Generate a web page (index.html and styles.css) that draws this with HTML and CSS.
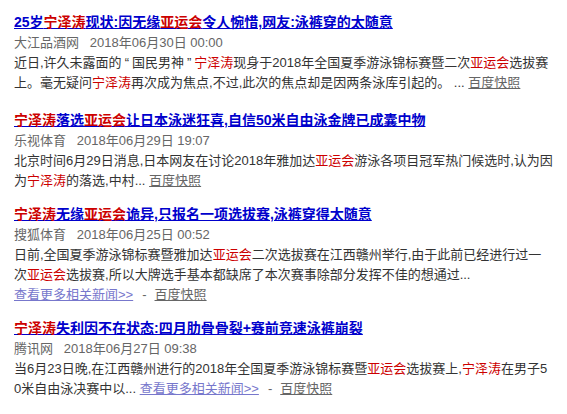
FILE: index.html
```html
<!DOCTYPE html>
<html lang="zh-CN">
<head>
<meta charset="utf-8">
<title>宁泽涛 相关新闻</title>
<link rel="stylesheet" href="styles.css">
</head>
<body>
<div class="results">
  <div class="item">
    <h3 class="title"><a href="#">25岁<em>宁泽涛</em>现状:因无缘<em>亚运会</em>令人惋惜,网友:泳裤穿的太随意</a></h3>
    <div class="meta">大江品酒网&nbsp;&nbsp;&nbsp;2018年06月30日 00:00</div>
    <div class="abs">近日,许久未露面的<span class="q">“</span>国民男神<span class="q">”</span><em>宁泽涛</em>现身于2018年全国夏季游泳锦标赛暨二次<em>亚运会</em>选拔赛上。毫无疑问<em>宁泽涛</em>再次成为焦点,不过,此次的焦点却是因两条泳库引起的。 ... <a class="snap" href="#">百度快照</a></div>
  </div>
  <div class="item">
    <h3 class="title"><a href="#"><em>宁泽涛</em>落选<em>亚运会</em>让日本泳迷狂喜,自信50米自由泳金牌已成囊中物</a></h3>
    <div class="meta">乐视体育&nbsp;&nbsp;&nbsp;2018年06月29日 19:07</div>
    <div class="abs">北京时间6月29日消息,日本网友在讨论2018年雅加达<em>亚运会</em>游泳各项目冠军热门候选时,认为因为<em>宁泽涛</em>的落选,中村... <a class="snap" href="#">百度快照</a></div>
  </div>
  <div class="item">
    <h3 class="title"><a href="#"><em>宁泽涛</em>无缘<em>亚运会</em>诡异,只报名一项选拔赛,泳裤穿得太随意</a></h3>
    <div class="meta">搜狐体育&nbsp;&nbsp;&nbsp;2018年06月25日 00:52</div>
    <div class="abs">日前,全国夏季游泳锦标赛暨雅加达<em>亚运会</em>二次选拔赛在江西赣州举行,由于此前已经进行过一次<em>亚运会</em>选拔赛,所以大牌选手基本都缺席了本次赛事除部分发挥不佳的想通过...</div>
    <div class="links"><a class="more" href="#">查看更多相关新闻&gt;&gt;</a><span class="sep">-</span><a class="snap" href="#">百度快照</a></div>
  </div>
  <div class="item">
    <h3 class="title"><a href="#"><em>宁泽涛</em>失利因不在状态:四月肋骨骨裂+赛前竞速泳裤崩裂</a></h3>
    <div class="meta">腾讯网&nbsp;&nbsp;&nbsp;2018年06月27日 09:38</div>
    <div class="abs">当6月23日晚,在江西赣州进行的2018年全国夏季游泳锦标赛暨<em>亚运会</em>选拔赛上,<em>宁泽涛</em>在男子50米自由泳决赛中以... <a class="more" href="#">查看更多相关新闻&gt;&gt;</a><span class="sep">-</span><a class="snap" href="#">百度快照</a></div>
  </div>
</div>
</body>
</html>
```
FILE: styles.css
```css
html, body {
  margin: 0;
  padding: 0;
  background: #fff;
}
body {
  font-family: "Liberation Sans", Arial, "Noto Sans CJK SC", sans-serif;
  color: #333;
}
.results {
  width: 540px;
  padding: 11px 14px 0 14px;
}
.item {
  margin-bottom: 12px;
}
.item:first-child {
  margin-bottom: 16px;
}
.title {
  margin: 0;
  font-size: 14px;
  font-weight: bold;
  line-height: 22px;
}
.title a {
  color: #0000cc;
  text-decoration: underline;
}
.title em {
  font-style: normal;
  color: #cc0000;
}
.meta {
  font-size: 13px;
  line-height: 20px;
  color: #666;
}
.abs {
  font-size: 13px;
  line-height: 20px;
  color: #333;
  word-break: break-all;
}
.abs em {
  font-style: normal;
  color: #cc0000;
}
.q {
  padding: 0 3px;
}
.links {
  font-size: 13px;
  line-height: 20px;
}
.snap {
  color: #666;
  text-decoration: underline;
}
.more {
  color: #7777cc;
  text-decoration: underline;
}
.sep {
  color: #666;
  padding: 0 8px 0 9px;
}
```
